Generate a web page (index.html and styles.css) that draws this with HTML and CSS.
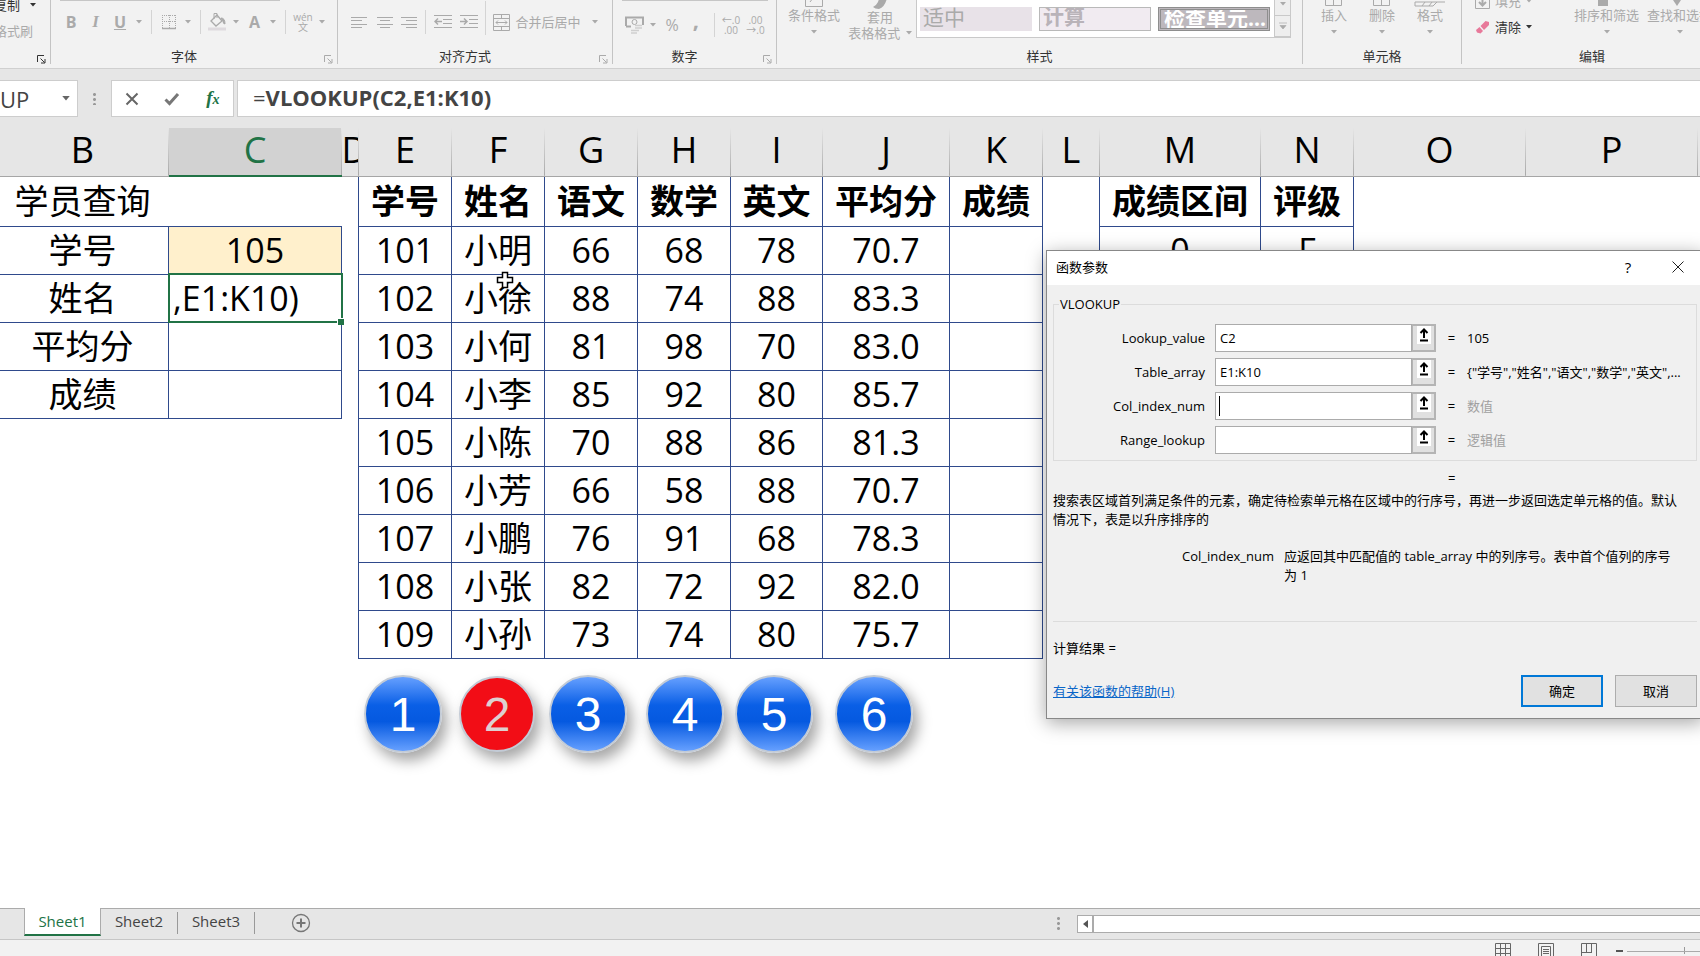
FILE: index.html
```html
<!DOCTYPE html>
<html lang="zh-CN">
<head>
<meta charset="utf-8">
<title>VLOOKUP</title>
<link rel="stylesheet" href="styles.css">
</head>
<body>
<svg class="defs" aria-hidden="true">
  <symbol id="caret" viewBox="0 0 6 4"><path d="M0 0h6L3 3.5z" fill="currentColor"/></symbol>
  <symbol id="launch" viewBox="0 0 9 9"><path d="M.5 7V.5H7M3.500 3.500l4 4M8 4v4H4" fill="none" stroke="currentColor"/></symbol>
  <symbol id="pick" viewBox="0 0 14 18"><path d="M0 0h14v18H0z" fill="#fff"/><path d="M7 12V4M3.500 7L7 3.500 10.500 7M3 14.500h8" fill="none" stroke="#000" stroke-width="2"/></symbol>
</svg>

<header class="ribbon">
  <section class="group clip">
    <div class="clip-items">
      <button class="small dark">复制<svg class="caret"><use href="#caret"/></svg></button>
      <button class="small">格式刷</button>
    </div>
    <button class="launcher dark" aria-label="剪贴板设置"><svg><use href="#launch"/></svg></button>
  </section>

  <section class="group font">
    <div class="combo-edge"></div>
    <div class="tools">
      <button class="glyph"><b>B</b></button>
      <button class="glyph serif"><i>I</i></button>
      <button class="glyph"><b><u>U</u></b></button>
      <button class="arrow" aria-label="下划线选项"><svg class="caret"><use href="#caret"/></svg></button>
      <span class="sep"></span>
      <button aria-label="边框"><svg width="16" height="16" viewBox="0 0 16 16" fill="none" stroke="currentColor"><path d="M1 1.500h14M1 7.500h14M1.500 1v13M8.500 1v13M14.500 1v13" stroke-dasharray="1 1"/><path d="M1 14.500h14" stroke-width="1.500"/></svg></button>
      <button class="arrow" aria-label="边框选项"><svg class="caret"><use href="#caret"/></svg></button>
      <span class="sep"></span>
      <button aria-label="填充颜色"><svg width="20" height="20" viewBox="0 0 20 20" fill="none" stroke="currentColor"><path d="M4 9l6-6 5 6-6 5z" stroke-width="1.300"/><path d="M7 7V1.500h3V6"/><path d="M14 6q4 0 4 6-2 0-2-3z" fill="currentColor"/><path d="M1 15.500h18v3H1z" fill="#dedade" stroke="none"/></svg></button>
      <button class="arrow" aria-label="填充选项"><svg class="caret"><use href="#caret"/></svg></button>
      <button class="glyph"><b>A</b></button>
      <button class="arrow" aria-label="颜色选项"><svg class="caret"><use href="#caret"/></svg></button>
      <span class="sep"></span>
      <button class="pinyin"><span>wén</span><span>文</span></button>
      <button class="arrow" aria-label="拼音选项"><svg class="caret"><use href="#caret"/></svg></button>
    </div>
    <h2>字体</h2>
    <button class="launcher" aria-label="字体设置"><svg><use href="#launch"/></svg></button>
  </section>

  <section class="group align">
    <div class="tools">
      <button aria-label="左对齐"><svg width="16" height="13" viewBox="0 0 16 13" stroke="currentColor"><path d="M0 1.500h16M0 4.500h11M0 8.500h16M0 11.500h11"/></svg></button>
      <button aria-label="居中"><svg width="16" height="13" viewBox="0 0 16 13" stroke="currentColor"><path d="M0 1.500h16M3 4.500h10M0 8.500h16M3 11.500h10"/></svg></button>
      <button aria-label="右对齐"><svg width="16" height="13" viewBox="0 0 16 13" stroke="currentColor"><path d="M0 1.500h16M5 4.500h11M0 8.500h16M5 11.500h11"/></svg></button>
      <span class="sep"></span>
      <button aria-label="减少缩进"><svg width="18" height="16" viewBox="0 0 18 16" fill="none" stroke="currentColor"><path d="M0 1.500h18M9 5.500h9M9 9.500h9M0 13.500h18"/><path d="M8 7.500H1M4 4.500l-3 3 3 3" stroke-width="1.500"/></svg></button>
      <button aria-label="增加缩进"><svg width="18" height="16" viewBox="0 0 18 16" fill="none" stroke="currentColor"><path d="M0 1.500h18M9 5.500h9M9 9.500h9M0 13.500h18"/><path d="M0 7.500h7M4 4.500l3 3-3 3" stroke-width="1.500"/></svg></button>
      <span class="sep tall"></span>
      <button class="merge"><svg width="17" height="17" viewBox="0 0 17 17" fill="none" stroke="currentColor"><path d="M.5.500h16v16H.500zM.500 4.500h16M.500 12.500h16M8.500 0v4M8.500 13v4M3 8.500h11M5 6.500l-2 2 2 2M12 6.500l2 2-2 2"/></svg>合并后居中</button>
      <button class="arrow" aria-label="合并选项"><svg class="caret"><use href="#caret"/></svg></button>
    </div>
    <h2>对齐方式</h2>
    <button class="launcher" aria-label="对齐设置"><svg><use href="#launch"/></svg></button>
  </section>

  <section class="group number">
    <div class="combo-edge"></div>
    <div class="tools">
      <button aria-label="会计格式"><svg width="19" height="18" viewBox="0 0 19 18" fill="none" stroke="currentColor"><path d="M1 10V1.500h17V9M1 10.500h5" stroke-width="2"/><circle cx="9.500" cy="6" r="2.500"/><path d="M10 9.500h7M10 12h7M6 14.500h8M6 17h6" stroke="#cfcfcf" stroke-width="1.500"/></svg></button>
      <button class="arrow" aria-label="会计选项"><svg class="caret"><use href="#caret"/></svg></button>
      <button class="glyph">%</button>
      <button class="glyph comma"><b>,</b></button>
      <span class="sep"></span>
      <button class="dec"><span>←.0</span><span>.00</span></button>
      <button class="dec"><span>.00</span><span>→.0</span></button>
    </div>
    <h2>数字</h2>
    <button class="launcher" aria-label="数字设置"><svg><use href="#launch"/></svg></button>
  </section>

  <section class="group styles">
    <div class="bigs">
      <button class="big"><svg width="18" height="18" viewBox="0 0 18 18" fill="none" stroke="currentColor"><path d="M.5.500h17v17H.500zM5 13l6-8"/></svg>条件格式<svg class="caret"><use href="#caret"/></svg></button>
      <button class="big wide"><svg width="18" height="18" viewBox="0 0 18 18"><path d="M2 16q3-1 5-5l3-9 6 5q-2 9-8 11-4 0-6-2z" fill="currentColor"/></svg>套用<span>表格格式 <svg class="caret"><use href="#caret"/></svg></span></button>
      <div class="gallery">
        <button class="swatch neutral"><span>适中</span></button>
        <button class="swatch calc"><span>计算</span></button>
        <button class="swatch check"><span>检查单元...</span></button>
        <div class="gallery-nav">
          <button aria-label="向下"><svg class="caret"><use href="#caret"/></svg></button>
          <button aria-label="更多"><svg width="8" height="8" viewBox="0 0 8 8"><path d="M0 1h8M1 3.500h6L4 7z" fill="currentColor" stroke="currentColor" stroke-width=".7"/></svg></button>
        </div>
      </div>
    </div>
    <h2>样式</h2>
  </section>

  <section class="group cells">
    <div class="bigs">
      <button class="big"><svg width="18" height="18" viewBox="0 0 18 18" fill="none" stroke="currentColor"><path d="M.5.500h16v16H.500zM0 9h16M8.500 9v8"/></svg>插入<svg class="caret"><use href="#caret"/></svg></button>
      <button class="big"><svg width="18" height="18" viewBox="0 0 18 18" fill="none" stroke="currentColor"><path d="M.5.500h16v16H.500zM0 9h16M8.500 9v8"/></svg>删除<svg class="caret"><use href="#caret"/></svg></button>
      <button class="big"><svg width="32" height="18" viewBox="0 0 32 18" fill="none" stroke="currentColor"><path d="M1 13h30M1 13v4h18l4-4M8 17l3-4M15 17l3-4"/></svg>格式<svg class="caret"><use href="#caret"/></svg></button>
    </div>
    <h2>单元格</h2>
  </section>

  <section class="group edit">
    <div class="bigs">
      <div class="stack">
        <button class="small"><svg width="15" height="17" viewBox="0 0 15 17" fill="none" stroke="currentColor"><path d="M.5.500h14v16H.500z"/><path d="M7.500 4v9M4 10l3.500 3.500L11 10" stroke-width="2"/></svg>填充<svg class="caret"><use href="#caret"/></svg></button>
        <button class="small dark"><svg width="15" height="15" viewBox="0 0 15 15"><path d="M5.500 6L10.500 1l3.500 1v3L9 10z" fill="#e8799a"/><path d="M4.500 7l3.500 4-2.500 2.500-3.500-1L1 10z" fill="#e8799a"/></svg>清除<svg class="caret"><use href="#caret"/></svg></button>
      </div>
      <button class="big find"><svg width="18" height="18" viewBox="0 0 18 18"><path d="M0 4h10v13H0z" fill="currentColor"/></svg>排序和筛选<svg class="caret"><use href="#caret"/></svg></button>
      <button class="big find"><svg width="18" height="18" viewBox="0 0 18 18"><path d="M0 8l6 9 6-9z" fill="currentColor"/></svg>查找和选择<svg class="caret"><use href="#caret"/></svg></button>
    </div>
    <h2>编辑</h2>
  </section>
</header>

<div class="formula-bar">
  <div class="name-box"><input aria-label="名称框" value="UP"><svg class="name-caret"><use href="#caret"/></svg></div>
  <span class="dots"></span>
  <div class="fx-box">
    <button aria-label="取消"><svg width="14" height="14" viewBox="0 0 14 14"><path d="M1.500 1.500l11 11M12.500 1.500l-11 11" stroke="#666" stroke-width="2"/></svg></button>
    <button aria-label="输入"><svg width="16" height="14" viewBox="0 0 16 14" fill="none"><path d="M1.500 7.500l4 4L14 2" stroke="#777" stroke-width="3"/></svg></button>
    <button class="fx"><i>f<small>x</small></i></button>
  </div>
  <output class="formula">=<b>VLOOKUP(C2,E1:K10)</b></output>
</div>

<main class="sheet">
  <table class="grid">
    <colgroup>
      <col class="w172"><col class="w173"><col class="w17"><col class="w93"><col class="w93"><col class="w93"><col class="w93"><col class="w92"><col class="w127"><col class="w93"><col class="w57"><col class="w161"><col class="w93"><col class="w172"><col class="w172"><col class="w93">
    </colgroup>
    <thead>
      <tr><th>B</th><th class="current">C</th><th class="narrow"><span>D</span></th><th>E</th><th>F</th><th>G</th><th>H</th><th>I</th><th>J</th><th>K</th><th>L</th><th>M</th><th>N</th><th>O</th><th>P</th><th></th></tr>
    </thead>
    <tbody>
      <tr class="first"><td class="title">学员查询</td><td></td><td></td><th class="b">学号</th><th class="b">姓名</th><th class="b">语文</th><th class="b">数学</th><th class="b">英文</th><th class="b">平均分</th><th class="b">成绩</th><td></td><th class="b">成绩区间</th><th class="b">评级</th></tr>
      <tr><td class="b">学号</td><td class="b key">105</td><td></td><td class="b">101</td><td class="b">小明</td><td class="b">66</td><td class="b">68</td><td class="b">78</td><td class="b">70.7</td><td class="b"></td><td></td><td class="b">0</td><td class="b">F</td></tr>
      <tr><td class="b">姓名</td><td class="b active">,E1:K10)</td><td></td><td class="b">102</td><td class="b">小徐</td><td class="b">88</td><td class="b">74</td><td class="b">88</td><td class="b">83.3</td><td class="b"></td></tr>
      <tr><td class="b">平均分</td><td class="b"></td><td></td><td class="b">103</td><td class="b">小何</td><td class="b">81</td><td class="b">98</td><td class="b">70</td><td class="b">83.0</td><td class="b"></td></tr>
      <tr><td class="b">成绩</td><td class="b"></td><td></td><td class="b">104</td><td class="b">小李</td><td class="b">85</td><td class="b">92</td><td class="b">80</td><td class="b">85.7</td><td class="b"></td></tr>
      <tr><td></td><td></td><td></td><td class="b">105</td><td class="b">小陈</td><td class="b">70</td><td class="b">88</td><td class="b">86</td><td class="b">81.3</td><td class="b"></td></tr>
      <tr><td></td><td></td><td></td><td class="b">106</td><td class="b">小芳</td><td class="b">66</td><td class="b">58</td><td class="b">88</td><td class="b">70.7</td><td class="b"></td></tr>
      <tr><td></td><td></td><td></td><td class="b">107</td><td class="b">小鹏</td><td class="b">76</td><td class="b">91</td><td class="b">68</td><td class="b">78.3</td><td class="b"></td></tr>
      <tr><td></td><td></td><td></td><td class="b">108</td><td class="b">小张</td><td class="b">82</td><td class="b">72</td><td class="b">92</td><td class="b">82.0</td><td class="b"></td></tr>
      <tr><td></td><td></td><td></td><td class="b">109</td><td class="b">小孙</td><td class="b">73</td><td class="b">74</td><td class="b">80</td><td class="b">75.7</td><td class="b"></td></tr>
    </tbody>
  </table>
  <div class="badges">
    <span class="ball">1</span><span class="ball red">2</span><span class="ball">3</span><span class="ball">4</span><span class="ball">5</span><span class="ball">6</span>
  </div>
  <svg class="cursor" width="18" height="18" viewBox="0 0 18 18"><path d="M6.500 1.500h5v5h5v5h-5v5h-5v-5h-5v-5h5z" fill="#fff" stroke="#000" stroke-width="1.500"/></svg>

  <form class="dialog" role="dialog" aria-labelledby="dlg-title">
    <div class="dlg-bar">
      <h1 id="dlg-title">函数参数</h1>
      <button type="button" class="help">?</button>
      <button type="button" aria-label="关闭"><svg width="12" height="12" viewBox="0 0 12 12"><path d="M.5.500l11 11M11.500.500l-11 11" stroke="#222"/></svg></button>
    </div>
    <div class="dlg-body">
      <fieldset>
        <legend>VLOOKUP</legend>
        <div class="arg"><label for="a1">Lookup_value</label><input id="a1" value="C2"><button type="button" aria-label="选择区域"><svg><use href="#pick"/></svg></button><span>=</span><output>105</output></div>
        <div class="arg"><label for="a2">Table_array</label><input id="a2" value="E1:K10"><button type="button" aria-label="选择区域"><svg><use href="#pick"/></svg></button><span>=</span><output>{"学号","姓名","语文","数学","英文",...</output></div>
        <div class="arg"><label for="a3">Col_index_num</label><span class="field"><input id="a3"><i class="text-caret"></i></span><button type="button" aria-label="选择区域"><svg><use href="#pick"/></svg></button><span>=</span><output class="hint">数值</output></div>
        <div class="arg"><label for="a4">Range_lookup</label><input id="a4"><button type="button" aria-label="选择区域"><svg><use href="#pick"/></svg></button><span>=</span><output class="hint">逻辑值</output></div>
      </fieldset>
      <div class="total">=</div>
      <p class="desc">搜索表区域首列满足条件的元素，确定待检索单元格在区域中的行序号，再进一步返回选定单元格的值。默认情况下，表是以升序排序的</p>
      <dl><dt>Col_index_num</dt><dd>应返回其中匹配值的 table_array 中的列序号。表中首个值列的序号为 1</dd></dl>
      <p class="result">计算结果 =</p>
      <div class="dlg-foot">
        <a href="#">有关该函数的帮助(H)</a>
        <button type="button" class="primary">确定</button>
        <button type="button">取消</button>
      </div>
    </div>
  </form>
</main>

<nav class="tabs">
  <a href="#" class="tab on">Sheet1</a><a href="#" class="tab">Sheet2</a><a href="#" class="tab">Sheet3</a>
  <button class="add" aria-label="新工作表"><svg width="20" height="20" viewBox="0 0 20 20" fill="none" stroke="#777"><circle cx="10" cy="10" r="8.500" stroke-width="1.300"/><path d="M10 5.500v9M5.500 10h9" stroke-width="2"/></svg></button>
  <span class="dots"></span>
  <div class="hscroll"><button aria-label="向左滚动"><svg width="5" height="8" viewBox="0 0 5 8"><path d="M5 0v8L0 4z" fill="#555"/></svg></button><div class="thumb"></div></div>
</nav>
<footer class="status">
  <button aria-label="普通"><svg width="16" height="16" viewBox="0 0 16 16" fill="none" stroke="#666"><path d="M.5.500h15v15H.500zM0 5.500h16M0 10.500h16M5.500 0v16M10.500 0v16"/></svg></button>
  <button aria-label="页面布局"><svg width="16" height="16" viewBox="0 0 16 16" fill="none" stroke="#666"><path d="M.5.500h15v15H.500zM3.500 3.500h9v12h-9zM5 6.500h6M5 8.500h6M5 10.500h6"/></svg></button>
  <button aria-label="分页预览"><svg width="16" height="16" viewBox="0 0 16 16" fill="none" stroke="#666"><path d="M.5 16V.500h15V16M5.500 0v9M10.500 0v9M0 9.500h11"/></svg></button>
  <button class="minus" aria-label="缩小"></button>
  <div class="zoom"></div>
</footer>
</body>
</html>
```

FILE: styles.css
```css
* { box-sizing: border-box; }
body {
  margin: 0;
  height: 100vh;
  display: flex;
  flex-direction: column;
  overflow: hidden;
  background: #fff;
  color: #000;
  font: 13px/16px "Open Sans", "Noto Sans CJK SC", sans-serif;
}
button, input { font: inherit; color: inherit; border: 0; background: none; padding: 0; margin: 0; border-radius: 0; }
button { display: inline-flex; align-items: center; justify-content: center; white-space: nowrap; flex: none; }
input { outline: 0; min-width: 0; }
h1, h2, p, dl, dd { margin: 0; font: inherit; }
svg { flex: none; display: block; }
.defs { position: absolute; width: 0; height: 0; }
.caret { width: 6px; height: 4px; }

/* Ribbon */
.ribbon {
  display: flex;
  flex: none;
  height: 69px;
  padding-bottom: 4px;
  overflow: hidden;
  background: #f2f2f2;
  border-bottom: 1px solid #d0d0d0;
  color: #aaa;
}
.group { position: relative; display: flex; flex: none; flex-direction: column; justify-content: flex-end; border-right: 1px solid #c4c4c4; }
.group h2 { line-height: 16px; text-align: center; color: #333; }
.group.font, .group.align, .group.number { padding-right: 20px; }
.clip { width: 51px; }
.font { width: 287px; }
.align { width: 275px; }
.number { width: 164px; }
.styles { width: 526px; }
.cells { width: 159px; }
.edit { flex: 1; border: 0; min-width: 0; }
.edit h2 { padding-left: 22px; }
.dark { color: #333; }
.small { gap: 5px; }
.clip-items { display: flex; flex-direction: column; width: 36px; align-items: flex-end; gap: 10px; margin-bottom: 25px; }
.clip-items .small { margin-right: 3px; }
.clip-items .small.dark { gap: 10px; margin-right: 0; }
.launcher { position: absolute; right: 4px; bottom: 0; }
.launcher svg { width: 9px; height: 9px; }
.combo-edge { position: absolute; top: 0; left: 9px; width: 220px; height: 1px; background: #c6c6c6; }
.number .combo-edge { width: 146px; }
.tools { display: grid; align-items: center; justify-items: center; height: 26px; margin-bottom: 13px; margin-right: -20px; justify-content: start; padding-left: 8px; }
.font .tools { grid-template-columns: 24px 25px 24px 13px 12px 23px 16px 8px 26px 12px 25px 12px 12px 24px 14px; }
.align .tools { grid-template-columns: 26px 25px 24px 9px 26px 25px 8px 96px 20px; }
.number .tools { grid-template-columns: 26px 11px 28px 20px 16px 18px 31px; }
.sep { width: 1px; height: 24px; background: #d4d4d4; }
.sep.tall { height: 34px; margin-top: -8px; }
.glyph { font-size: 16px; line-height: 20px; }
.serif { font-family: "Liberation Serif", serif; font-size: 17px; font-weight: bold; }
.comma { font-size: 22px; padding-bottom: 12px; }
.pinyin, .dec { flex-direction: column; font-size: 10px; line-height: 10px; }
.merge { gap: 5px; }

.bigs { display: flex; align-items: flex-end; margin-bottom: 13px; }
.big { flex-direction: column; }
.big .caret { margin: 7px 0 1px; }
.styles .bigs { padding-left: 8px; margin-bottom: 10px; }
.styles .big { width: 58px; margin-bottom: 3px; }
.styles .big.wide { width: 66px; margin-left: 4px; margin-bottom: -3px; }
.big.wide .caret { display: inline-block; margin: 0 0 3px 2px; }
.gallery { display: flex; gap: 7px; height: 44px; padding: 0 0 6px 3px; margin-left: 3px; align-items: flex-end; background: #fff; border: 1px solid #c9c9c9; border-right: 0; }
.swatch { width: 112px; height: 24px; overflow: hidden; justify-content: flex-start; align-items: flex-start; padding-left: 3px; font-size: 21px; line-height: 21px; color: #aaa; }
.neutral { background: #e8e2e8; }
.calc { background: #f1ebf1; border: 1px solid #b9b9b9; font-weight: bold; color: #b9b3b9; }
.check { background: #bdb8bd; border: 3px double #8e8e8e; color: #fff; font-weight: bold; }
.check span, .calc span { margin-top: -2px; }
.gallery-nav { width: 17px; height: 44px; margin: 0 0 -6px -3px; display: flex; flex-direction: column; border: 1px solid #c9c9c9; background: #eee; }
.gallery-nav button { flex: 1; }
.gallery-nav button + button { border-top: 1px solid #c9c9c9; }
.cells .bigs { padding-left: 7px; }
.cells .big { width: 48px; }
.edit .bigs { padding-left: 13px; }
.stack { display: flex; flex: none; flex-direction: column; gap: 10px; width: 95px; align-items: flex-start; }
.find { width: 73px; }

/* Formula bar */
.formula-bar { display: flex; flex: none; height: 59px; padding: 11px 0; background: #e6e6e6; align-items: stretch; }
.name-box, .fx-box, .formula { background: #fff; border: 1px solid #cdcdcd; }
.name-box { display: flex; align-items: center; width: 78px; border-left: 0; }
.name-box input { width: 62px; font-size: 22px; line-height: 30px; color: #444; }
.name-caret { width: 8px; height: 5px; color: #666; }
.dots { width: 3px; margin: 12px 15px; background: radial-gradient(circle, #999 1px, transparent 2px) 0 0 / 3px 5px; }
.fx-box { display: grid; grid-template-columns: repeat(3, 1fr); width: 123px; }
.fx { color: #217346; font: bold 19px/24px "Liberation Serif", serif; }
.fx small { font-size: 14px; }
.formula { flex: 1; margin-left: 3px; padding-left: 15px; border-right: 0; font-size: 22px; line-height: 33px; color: #444; }

/* Worksheet */
.sheet { position: relative; flex: 1; min-height: 0; overflow: hidden; }
.grid { table-layout: fixed; border-collapse: collapse; margin-left: -4px; width: 1794px; font-size: 34px; line-height: 40px; }
.w17 { width: 17px; } .w57 { width: 57px; } .w92 { width: 92px; } .w93 { width: 93px; }
.w127 { width: 127px; } .w161 { width: 161px; } .w172 { width: 172px; } .w173 { width: 173px; }
.grid th, .grid td { padding: 0; text-align: center; white-space: nowrap; }
.grid thead th {
  height: 48px;
  padding-bottom: 3px;
  background: linear-gradient(#e6e6e6, #a8a8a8) right / 1px 100% no-repeat #e6e6e6;
  border-bottom: 1px solid #a6a6a6;
  font-weight: normal;
  font-size: 36px;
}
.grid thead .current { background-color: #d2d2d2; color: #217346; border-bottom: 2px solid #217346; }
.narrow span { display: block; width: 16px; overflow: hidden; text-align: left; }
.grid tbody tr { height: 48px; }
.grid tbody .first { height: 50px; }
.grid .b { border: 1px solid #2f4a8c; }
.grid .first .b { border-top: 0; }
.grid .title { text-align: left; padding-left: 18px; }
.key { background: #fff0cc; }
.grid .active { position: relative; text-align: left; padding-left: 4px; outline: 2px solid #217346; outline-offset: -1px; }
.active::after { content: ""; position: absolute; right: -3px; bottom: -3px; width: 6px; height: 6px; background: #217346; border: solid #fff; border-width: 1px 0 0 1px; }
.badges { display: grid; grid-template-columns: 94px 94px 88px 106px 72px 128px; justify-items: center; align-items: center; padding: 16px 0 0 356px; }
.ball {
  width: 78px; height: 78px; border-radius: 50%; border: 2px solid #c3cbd6;
  background: linear-gradient(#66a0ff, #0a5fe6 38%, #0559e0 60%, #66a0ff);
  box-shadow: 5px 8px 14px rgba(0, 0, 0, .35);
  color: #fff; font: 48px/76px "Liberation Sans", sans-serif; text-align: center;
}
.ball.red { width: 76px; height: 76px; line-height: 74px; background: #f20d16; color: #ddd0d0; }
.cursor { position: absolute; left: 496px; top: 143px; }

/* Function arguments dialog */
.dialog { position: absolute; left: 1046px; right: -4px; top: 122px; background: #f0f0f0; border: 1px solid #888; box-shadow: 0 4px 18px rgba(0, 0, 0, .35); font-size: 13px; line-height: 19px; }
.dlg-bar { display: flex; align-items: center; height: 34px; padding: 0 0 2px 9px; background: #fff; }
.dlg-bar h1 { flex: 1; }
.dlg-bar button { width: 50px; }
.help { font-size: 15px; }
.dlg-body { padding: 10px 6px 11px; }
fieldset { margin: 0; padding: 10px 0 6px; border: 1px solid #dcdcdc; min-width: 0; display: grid; gap: 6px; }
legend { margin-left: 5px; padding: 0 1px; }
.arg { display: grid; grid-template-columns: 150px 207px 24px 31px 1fr; height: 28px; align-items: center; margin-left: 1px; }
.arg label { text-align: right; }
.arg input { width: 100%; height: 28px; border: 1px solid #ababab; background: #fff; padding-left: 4px; }
.arg label + * { margin-left: 10px; width: 197px; }
.arg button { height: 28px; border: 2px solid #b4b4b4; border-left-width: 1px; background: #e0e0e0; align-items: flex-start; }
.arg button svg { width: 14px; height: 18px; }
.arg > span:not(.field) { text-align: center; }
.arg output { white-space: nowrap; }
.hint { color: #a0a0a0; }
.field { position: relative; }
.text-caret { position: absolute; left: 4px; top: 4px; width: 1px; height: 20px; background: #000; }
.total { padding: 8px 0 3px 395px; }
.desc { padding-right: 20px; margin-bottom: 18px; }
dl { display: grid; grid-template-columns: 221px 1fr; gap: 10px; padding: 0 20px 36px 0; border-bottom: 1px solid #dcdcdc; }
dt { text-align: right; }
.result { padding: 17px 0; }
.dlg-foot { display: flex; align-items: center; gap: 12px; }
.dlg-foot a { margin-right: auto; color: #0a66c8; }
.dlg-foot button { width: 82px; height: 32px; background: #e1e1e1; border: 1px solid #adadad; }
.dlg-foot .primary { border: 2px solid #0078d7; }

/* Sheet tabs and status bar */
.tabs { display: flex; flex: none; height: 32px; padding-left: 24px; background: #e6e6e6; border-top: 1px solid #ababab; border-bottom: 1px solid #c6c6c6; }
.tab { width: 77px; height: 27px; text-align: center; text-decoration: none; color: #444; font-size: 15px; line-height: 24px; }
.tab:not(.on) { border-right: 1px solid #999; height: 22px; margin-top: 3px; line-height: 18px; }
.tab.on { margin-top: -1px; height: 28px; line-height: 26px; background: #fff; color: #217346; border: solid #ababab; border-width: 0 1px; border-bottom: 2px solid #217346; }
.add { margin: 0 auto 0 36px; height: 28px; }
.tabs .dots { margin: 7px 17px; }
.hscroll { display: flex; width: 623px; height: 18px; margin-top: 6px; border: 1px solid #ababab; border-right: 0; background: #fff; }
.hscroll button { width: 16px; border-right: 2px solid #ababab; }
.thumb { flex: 1; }
.status { display: flex; flex: none; height: 16px; padding-top: 3px; justify-content: flex-end; gap: 27px; background: #f2f2f2; overflow: hidden; align-items: flex-start; }
.minus { width: 7px; height: 2px; margin: 7px 0 0 -8px; background: #555; }
.zoom { width: 73px; height: 7px; margin: 4px 0 0 -23px; background: linear-gradient(#aaa, #aaa) 0 4px / 100% 1px no-repeat, linear-gradient(#999, #999) 57px 0 / 1px 7px no-repeat; }
```
